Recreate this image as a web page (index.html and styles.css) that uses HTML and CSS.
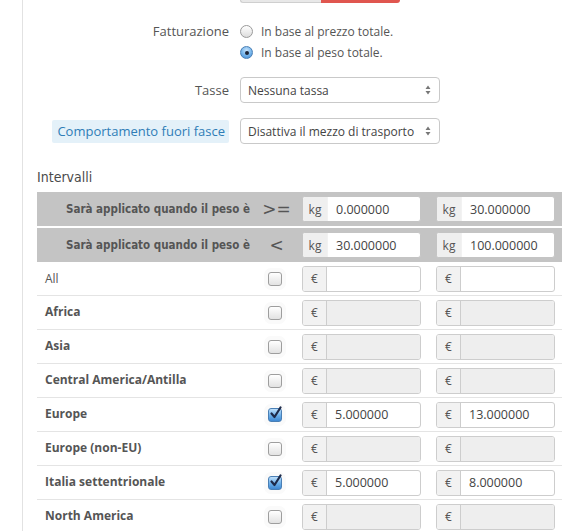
FILE: index.html
```html
<!DOCTYPE html>
<html>
<head>
<meta charset="utf-8">
<link rel="stylesheet" href="styles.css">
</head>
<body>
<div class="panel">
  <div class="switch"><span class="sw-off"></span><span class="sw-on"></span></div>

  <div class="form-row fatt">
    <div class="lbl">Fatturazione</div>
    <div class="radios">
      <div class="radio"><span class="rb"></span>In base al prezzo totale.</div>
      <div class="radio"><span class="rb on"></span>In base al peso totale.</div>
    </div>
  </div>

  <div class="form-row tasse">
    <div class="lbl">Tasse</div>
    <div class="select"><span>Nessuna tassa</span><svg class="arr" width="6" height="10" viewBox="0 0 6 10"><path d="M3 0.5 L5.5 4 L0.5 4 Z M3 9.5 L5.5 6 L0.5 6 Z" fill="#777"/></svg></div>
  </div>

  <div class="form-row comp">
    <div class="lbl"><span class="tip">Comportamento fuori fasce</span></div>
    <div class="select"><span>Disattiva il mezzo di trasporto</span><svg class="arr" width="6" height="10" viewBox="0 0 6 10"><path d="M3 0.5 L5.5 4 L0.5 4 Z M3 9.5 L5.5 6 L0.5 6 Z" fill="#777"/></svg></div>
  </div>

  <h3 class="title">Intervalli</h3>

  <div class="table">
    <div class="hrow">
      <div class="hlabel">Sarà applicato quando il peso è</div>
      <div class="sym">&gt;=</div>
      <div class="grp hgrp"><span class="addon">kg</span><span class="val">0.000000</span></div>
      <div class="grp hgrp"><span class="addon">kg</span><span class="val">30.000000</span></div>
    </div>
    <div class="hrow">
      <div class="hlabel">Sarà applicato quando il peso è</div>
      <div class="sym">&lt;</div>
      <div class="grp hgrp"><span class="addon">kg</span><span class="val">30.000000</span></div>
      <div class="grp hgrp"><span class="addon">kg</span><span class="val">100.000000</span></div>
    </div>

    <div class="drow">
      <div class="zone normal">All</div>
      <div class="cbcell"><span class="cb"></span></div>
      <div class="grp"><span class="addon">€</span><span class="val"></span></div>
      <div class="grp"><span class="addon">€</span><span class="val"></span></div>
    </div>
    <div class="drow">
      <div class="zone">Africa</div>
      <div class="cbcell"><span class="cb"></span></div>
      <div class="grp dis"><span class="addon">€</span><span class="val"></span></div>
      <div class="grp dis"><span class="addon">€</span><span class="val"></span></div>
    </div>
    <div class="drow">
      <div class="zone">Asia</div>
      <div class="cbcell"><span class="cb"></span></div>
      <div class="grp dis"><span class="addon">€</span><span class="val"></span></div>
      <div class="grp dis"><span class="addon">€</span><span class="val"></span></div>
    </div>
    <div class="drow">
      <div class="zone">Central America/Antilla</div>
      <div class="cbcell"><span class="cb"></span></div>
      <div class="grp dis"><span class="addon">€</span><span class="val"></span></div>
      <div class="grp dis"><span class="addon">€</span><span class="val"></span></div>
    </div>
    <div class="drow">
      <div class="zone">Europe</div>
      <div class="cbcell"><span class="cb on"><svg class="tick" width="14" height="14" viewBox="0 0 14 14"><path d="M2.5 7.5 L5.5 11 L11.5 1.5" fill="none" stroke="#1d2a4a" stroke-width="2.2" stroke-linecap="round" stroke-linejoin="round"/></svg></span></div>
      <div class="grp"><span class="addon">€</span><span class="val">5.000000</span></div>
      <div class="grp"><span class="addon">€</span><span class="val">13.000000</span></div>
    </div>
    <div class="drow">
      <div class="zone">Europe (non-EU)</div>
      <div class="cbcell"><span class="cb"></span></div>
      <div class="grp dis"><span class="addon">€</span><span class="val"></span></div>
      <div class="grp dis"><span class="addon">€</span><span class="val"></span></div>
    </div>
    <div class="drow">
      <div class="zone">Italia settentrionale</div>
      <div class="cbcell"><span class="cb on"><svg class="tick" width="14" height="14" viewBox="0 0 14 14"><path d="M2.5 7.5 L5.5 11 L11.5 1.5" fill="none" stroke="#1d2a4a" stroke-width="2.2" stroke-linecap="round" stroke-linejoin="round"/></svg></span></div>
      <div class="grp"><span class="addon">€</span><span class="val">5.000000</span></div>
      <div class="grp"><span class="addon">€</span><span class="val">8.000000</span></div>
    </div>
    <div class="drow">
      <div class="zone">North America</div>
      <div class="cbcell"><span class="cb"></span></div>
      <div class="grp dis"><span class="addon">€</span><span class="val"></span></div>
      <div class="grp dis"><span class="addon">€</span><span class="val"></span></div>
    </div>
  </div>
</div>
</body>
</html>
```

FILE: styles.css
```css
html, body {
  margin: 0;
  padding: 0;
  background: #fff;
}
body {
  font-family: "Open Sans", "Liberation Sans", sans-serif;
  font-size: 12px;
  color: #555;
  overflow: hidden;
}
.panel {
  margin-left: 22px;
  border-left: 1px solid #e2e2e2;
  padding-left: 14px;
  min-height: 531px;
}
.switch {
  display: flex;
  margin-left: 203px;
  width: 160px;
  height: 3px;
}
.sw-off {
  flex: 1;
  background: #e8e8e8;
  border-bottom: 1px solid #cfcfcf;
  border-left: 1px solid #cfcfcf;
  border-radius: 0 0 0 3px;
}
.sw-on {
  flex: 1;
  background: #e0564f;
  border-radius: 0 0 3px 0;
}
.form-row {
  display: grid;
  grid-template-columns: 192px 200px;
  column-gap: 11px;
  align-items: center;
}
.lbl {
  text-align: right;
  font-size: 13px;
  color: #555;
}
.fatt {
  margin-top: 18px;
  align-items: start;
}
.fatt .lbl {
  line-height: 21px;
}
.radio {
  display: flex;
  align-items: center;
  height: 21px;
  white-space: nowrap;
  color: #555;
}
.rb {
  width: 11px;
  height: 11px;
  border-radius: 50%;
  border: 1px solid #9a9a9a;
  background: linear-gradient(#ffffff, #dcdcdc);
  margin-right: 8px;
  box-sizing: content-box;
  flex: none;
  display: flex;
  align-items: center;
  justify-content: center;
}
.rb.on {
  border-color: #4a7fb5;
  background: radial-gradient(circle at 50% 30%, #c6e2fb 0%, #7ab8ec 50%, #3e86d1 100%);
}
.rb.on::after {
  content: "";
  width: 4px;
  height: 4px;
  border-radius: 50%;
  background: #1c2436;
}
.tasse {
  margin-top: 14px;
}
.comp {
  margin-top: 15px;
}
.select {
  height: 26px;
  box-sizing: border-box;
  border: 1px solid #c9c9c9;
  border-radius: 4px;
  background: #fff;
  display: flex;
  align-items: center;
  justify-content: space-between;
  padding: 0 8px 0 7px;
  color: #444;
  font-size: 12px;
  white-space: nowrap;
}
.tip {
  display: inline-block;
  background: #e4f1f9;
  color: #2f7db7;
  padding: 0 4px 0 5px;
  line-height: 23px;
  border-radius: 2px;
  white-space: nowrap;
}
.title {
  margin: 23px 0 5px 0;
  font-family: "DejaVu Sans Condensed", "DejaVu Sans", sans-serif;
  font-stretch: condensed;
  font-weight: normal;
  font-size: 14px;
  line-height: 20px;
  color: #4a4a4a;
}
.table {
  width: 525px;
}
.hrow, .drow {
  display: grid;
  grid-template-columns: 221px 37px 126px 134px;
  align-items: center;
}
.hrow {
  height: 34px;
  background: #c4c4c4;
  margin-bottom: 2px;
}
.hrow + .hrow {
  margin-bottom: 0;
}
.hlabel {
  text-align: right;
  padding-right: 8px;
  font-family: "DejaVu Sans Condensed", "DejaVu Sans", sans-serif;
  font-stretch: condensed;
  font-weight: bold;
  font-size: 11.5px;
  color: #555;
  white-space: nowrap;
}
.sym {
  text-align: center;
  font-size: 17px;
  color: #555;
  font-family: "DejaVu Sans", sans-serif;
}
.grp {
  justify-self: end;
  width: 119px;
  height: 26px;
  box-sizing: border-box;
  display: flex;
  border: 1px solid #cdcdcd;
  border-radius: 3px;
  background: #fff;
  overflow: hidden;
}
.addon {
  width: 23px;
  flex: none;
  background: #f2f2f2;
  border-right: 1px solid #cdcdcd;
  display: flex;
  align-items: center;
  justify-content: center;
  color: #555;
  font-size: 12px;
}
.val {
  flex: 1;
  display: flex;
  align-items: center;
  padding-left: 8px;
  font-size: 12.5px;
  color: #444;
}
.hgrp {
  border-color: #c4c4c4;
}
.hgrp .addon {
  width: 24px;
  border-right-color: #f2f2f2;
  background: #efefef;
}
.dis .val {
  background: #eeeeee;
}
.drow {
  height: 34px;
  box-sizing: border-box;
  border-bottom: 1px solid #e4e4e4;
}
.zone {
  padding-left: 8px;
  padding-bottom: 2px;
  font-weight: bold;
  font-size: 12px;
  color: #555;
  white-space: nowrap;
}
.zone.normal {
  font-weight: normal;
  padding-bottom: 0;
}
.cbcell {
  display: flex;
  justify-content: center;
  padding-right: 3px;
}
.cb {
  position: relative;
  width: 12px;
  height: 12px;
  border: 1px solid #9e9e9e;
  border-radius: 3px;
  background: linear-gradient(#ffffff, #e2e2e2);
  box-shadow: 0 0 0 4px #fafafa;
}
.cb.on {
  border-color: #4a7fb5;
  background: linear-gradient(#bfe0fb, #6aaee9 55%, #3f88d2);
}
.tick {
  position: absolute;
  left: 0;
  top: -3px;
}
```
